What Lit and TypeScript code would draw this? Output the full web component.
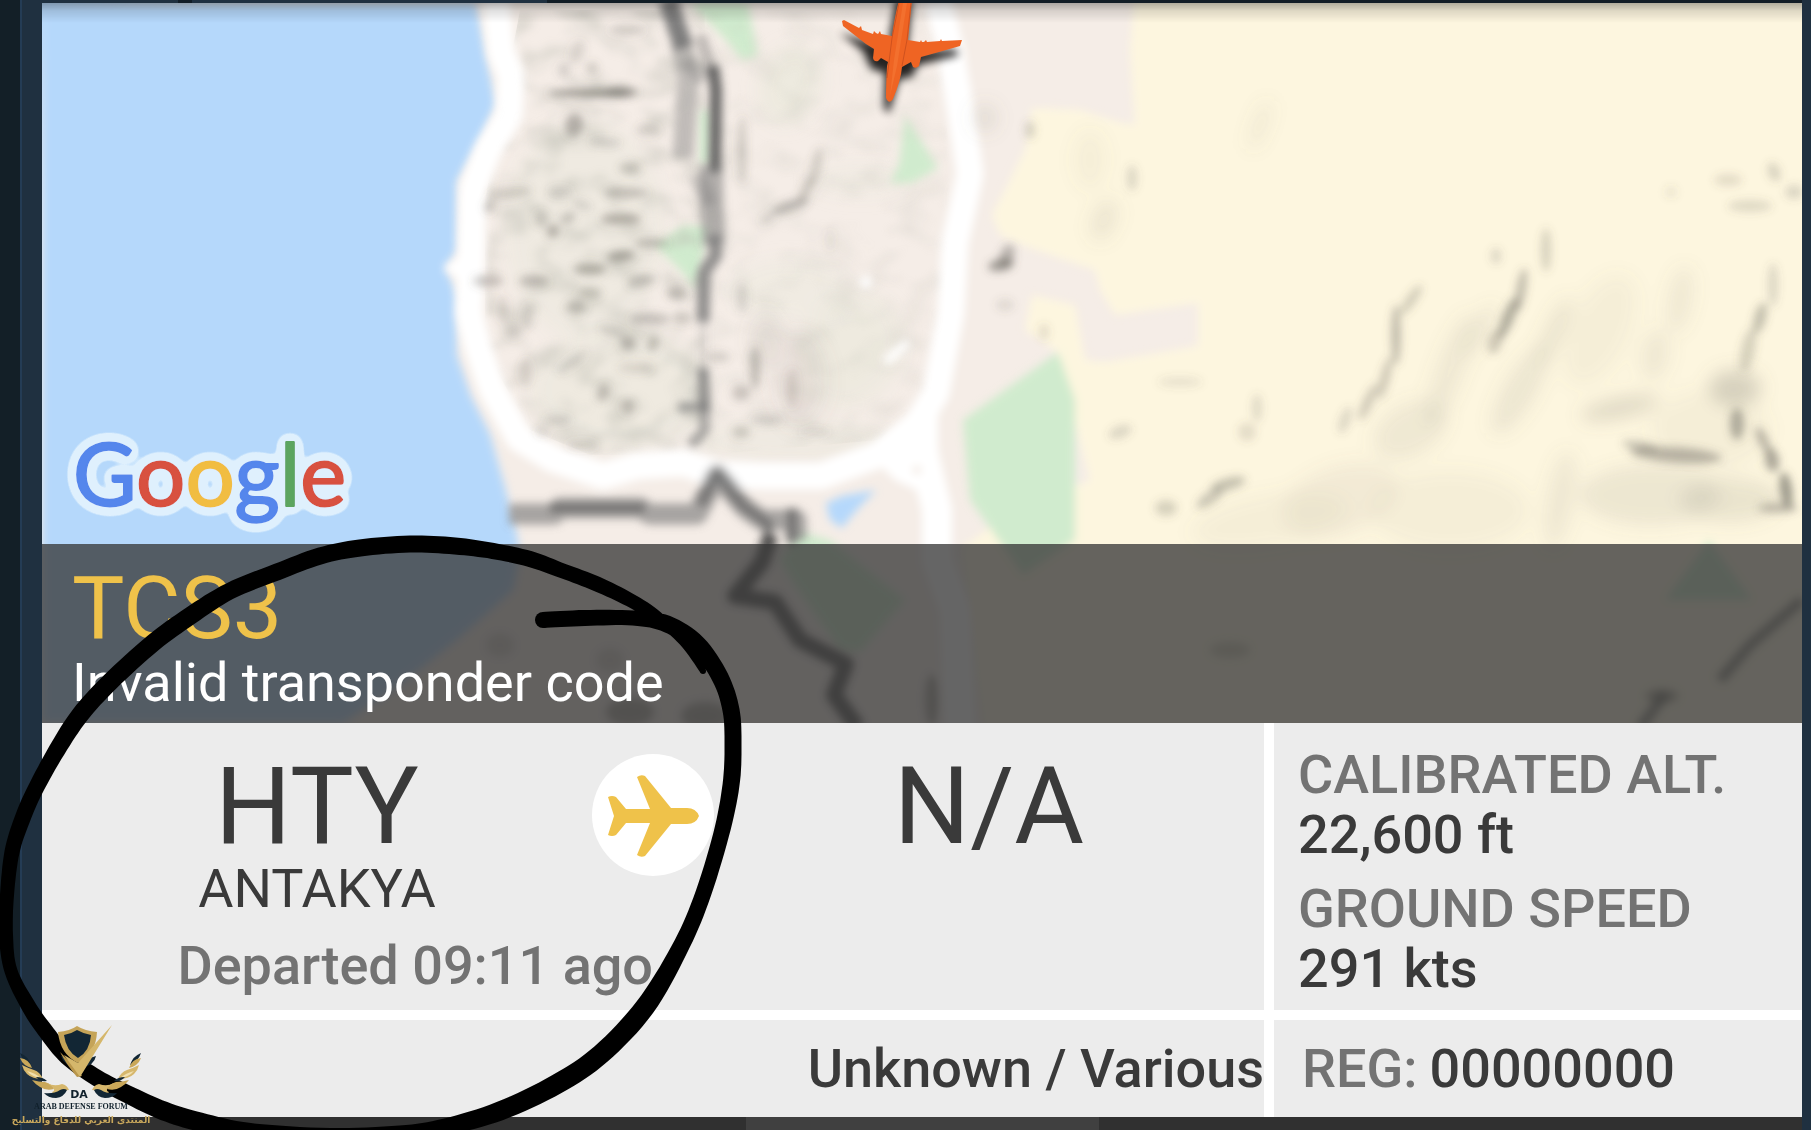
import { LitElement, html, svg, css } from "lit";
import { customElement } from "lit/decorators.js";

type Pt = [number, number];
type InkPt = [number, number, number];

/* Samples a Catmull-Rom curve through the points, then offsets it by half the pen width on each side. */
function ribbon(points: InkPt[]): string {
  const samples: InkPt[] = [];
  const n = points.length;
  for (let i = 0; i < n - 1; i++) {
    const p0 = points[Math.max(0, i - 1)];
    const p1 = points[i];
    const p2 = points[i + 1];
    const p3 = points[Math.min(n - 1, i + 2)];
    for (let s = 0; s < 8; s++) {
      const t = s / 8;
      const v = [0, 1, 2].map(
        (k) =>
          0.5 *
          (2 * p1[k] +
            (p2[k] - p0[k]) * t +
            (2 * p0[k] - 5 * p1[k] + 4 * p2[k] - p3[k]) * t * t +
            (3 * p1[k] - p0[k] - 3 * p2[k] + p3[k]) * t * t * t),
      );
      samples.push([v[0], v[1], v[2]]);
    }
  }
  samples.push(points[n - 1]);
  const left: string[] = [];
  const right: string[] = [];
  samples.forEach((p, i) => {
    const a = samples[Math.max(0, i - 1)];
    const b = samples[Math.min(samples.length - 1, i + 1)];
    const len = Math.hypot(b[0] - a[0], b[1] - a[1]) || 1;
    const nx = (-(b[1] - a[1]) / len) * (p[2] / 2);
    const ny = ((b[0] - a[0]) / len) * (p[2] / 2);
    left.push(`${(p[0] + nx).toFixed(1)} ${(p[1] + ny).toFixed(1)}`);
    right.unshift(`${(p[0] - nx).toFixed(1)} ${(p[1] - ny).toFixed(1)}`);
  });
  return `M${left.concat(right).join("L")}Z`;
}

const INK: InkPt[] = [
  [543, 620, 16], [585, 618, 16], [633, 618, 15], [667, 624, 17], [697, 644, 18],
  [720, 677, 17], [731, 710, 17], [733, 745, 17], [731, 785, 17], [721, 835, 16],
  [701, 900, 16], [679, 950, 17], [645, 1007, 20], [601, 1054, 20], [557, 1084, 20],
  [500, 1111, 19], [445, 1127, 17], [400, 1134, 17], [330, 1137, 18], [250, 1132, 18],
  [200, 1122, 19], [164, 1111, 19], [127, 1094, 18], [97, 1078, 17], [67, 1057, 16],
  [47, 1033, 16], [29, 1007, 15], [11, 971, 13], [6, 935, 14], [7, 895, 14],
  [12, 852, 15], [22, 820, 16], [35, 790, 16], [57, 750, 17], [80, 715, 18],
  [110, 682, 18], [153, 643, 18], [190, 616, 18], [230, 591, 17], [277, 572, 17],
  [320, 556, 17], [360, 548, 17], [410, 544, 17], [455, 546, 17], [493, 551, 16],
  [530, 559, 16], [563, 571, 15], [597, 584, 15], [630, 600, 14], [657, 617, 12],
  [683, 642, 8], [703, 671, 6],
];

const COAST =
  "M42 3H476L486 56L496 104L484 132L469 160L457 181V250L446 268L457 295V355L471 396L490 434L505 487L517 535L520 555L513 590L460 637L400 685L343 723H42Z";
const RING =
  "M496 0L501 52L511 76L509 115L488 150L473 188L471 264L469 313L478 348L492 389L519 438L553 459L603 476L637 466L683 463L718 474L764 476L821 476L878 455L917 424L936 393L951 313L955 243L970 174L964 132L951 52L938 0";

/* Relief shading: x, y, rx, ry, tilt, opacity. */
const RELIEF: number[][] = [
  [590, 93, 42, 4, 0, 0.6], [622, 92, 16, 5, 0, 0.5], [574, 125, 9, 12, 10, 0.4], [605, 142, 16, 4, 0, 0.2],
  [627, 30, 18, 5, 0, 0.25], [577, 52, 7, 12, 20, 0.18], [592, 68, 6, 6, 0, 0.24], [564, 70, 6, 8, 0, 0.2],
  [648, 130, 12, 6, 0, 0.18], [630, 168, 11, 6, 0, 0.26], [510, 193, 22, 6, -8, 0.24], [489, 207, 5, 6, 0, 0.3],
  [560, 192, 12, 5, 0, 0.2], [626, 193, 22, 5, 0, 0.32], [541, 219, 6, 8, 0, 0.25], [568, 218, 8, 5, -30, 0.3],
  [553, 231, 6, 7, 30, 0.42], [582, 205, 10, 4, 20, 0.2], [621, 219, 20, 6, 0, 0.42], [651, 243, 17, 5, 0, 0.34],
  [621, 256, 14, 5, -6, 0.42], [590, 269, 16, 6, 0, 0.44], [488, 281, 15, 6, 0, 0.32], [534, 281, 15, 6, 0, 0.32],
  [641, 281, 14, 6, -10, 0.3], [590, 293, 12, 6, 0, 0.24], [576, 307, 10, 7, 0, 0.34], [677, 293, 10, 7, 0, 0.34],
  [503, 309, 5, 14, 0, 0.16], [528, 316, 5, 14, 10, 0.18], [650, 319, 20, 6, 0, 0.3], [682, 318, 10, 6, 0, 0.26],
  [514, 332, 8, 7, 0, 0.22], [613, 332, 14, 5, 20, 0.22], [628, 344, 7, 7, 0, 0.36], [653, 344, 5, 8, 20, 0.34],
  [572, 362, 18, 5, -35, 0.2], [636, 368, 18, 5, 0, 0.16], [526, 372, 6, 14, 0, 0.16], [603, 393, 6, 9, 20, 0.32],
  [628, 407, 6, 7, 0, 0.32], [558, 420, 14, 5, 0, 0.2], [582, 445, 16, 4, 0, 0.18], [543, 432, 8, 4, 0, 0.18],
  [742, 150, 4, 34, 0, 0.26], [816, 167, 5, 20, 12, 0.24], [790, 206, 19, 5, -20, 0.38], [806, 190, 5, 14, 25, 0.26],
  [767, 219, 8, 4, -30, 0.22], [742, 298, 5, 14, 0, 0.2], [755, 368, 5, 22, 0, 0.34], [718, 357, 12, 5, 0, 0.22],
  [741, 393, 9, 8, 0, 0.28], [767, 420, 16, 5, 0, 0.2], [741, 432, 9, 6, 0, 0.26], [792, 388, 6, 20, 0, 0.16],
  [830, 240, 4, 12, 0, 0.1], [815, 432, 16, 4, 0, 0.12],
  [1001, 265, 13, 6, -10, 0.55], [1007, 256, 7, 12, 20, 0.4], [1030, 130, 5, 9, 0, 0.24], [1005, 305, 9, 6, 0, 0.14],
  [1044, 332, 5, 8, 0, 0.16], [1132, 178, 5, 13, 0, 0.2],
  [1411, 300, 5, 18, 35, 0.26], [1396, 335, 5, 30, 0, 0.36], [1385, 378, 5, 22, 15, 0.28], [1368, 402, 5, 20, 25, 0.28],
  [1345, 420, 5, 14, 20, 0.2], [1257, 408, 5, 14, 0, 0.18], [1247, 432, 9, 9, 20, 0.16], [1120, 432, 12, 6, -20, 0.2],
  [1228, 484, 18, 6, -15, 0.34], [1210, 498, 16, 6, -35, 0.3], [1166, 508, 11, 8, 0, 0.24], [1180, 382, 22, 5, 0, 0.12],
  [1546, 250, 5, 22, 0, 0.24], [1496, 256, 5, 8, 0, 0.2], [1521, 290, 5, 22, 10, 0.36], [1508, 318, 6, 22, 22, 0.46],
  [1495, 342, 7, 12, 15, 0.28], [1728, 180, 14, 6, 0, 0.16],
  [1774, 172, 6, 10, -20, 0.22], [1750, 206, 22, 6, 0, 0.18], [1794, 192, 9, 7, 0, 0.2], [1671, 192, 6, 6, 0, 0.1],
  [1773, 285, 5, 22, 0, 0.2], [1760, 318, 6, 16, 15, 0.34], [1748, 350, 7, 22, 12, 0.24],
  [1737, 424, 7, 16, 0, 0.46], [1676, 455, 46, 8, 4, 0.4], [1640, 446, 18, 5, 10, 0.3],
  [1763, 440, 5, 14, -25, 0.4], [1772, 460, 7, 12, -10, 0.5], [1786, 490, 6, 18, -8, 0.6], [1778, 508, 20, 5, 0, 0.36],
];

/* Wide, faint patches of relief: x, y, rx, ry, tilt, opacity. */
const HAZE: number[][] = [
  [1260, 125, 7, 26, 20, 0.1], [1104, 220, 12, 22, 20, 0.12], [985, 118, 12, 14, 0, 0.14], [1555, 330, 9, 36, 25, 0.14],
  [1735, 388, 26, 18, 0, 0.28], [1620, 408, 40, 10, -12, 0.22], [1655, 355, 14, 26, 10, 0.1], [1680, 300, 12, 34, 10, 0.1],
  [1410, 430, 40, 26, -30, 0.1], [1520, 390, 16, 50, 30, 0.12], [1650, 495, 70, 30, 0, 0.12], [1730, 500, 50, 22, 0, 0.14],
  [1340, 500, 60, 34, -20, 0.08], [1450, 370, 14, 60, 20, 0.1], [1480, 330, 8, 30, 30, 0.12], [1560, 500, 14, 50, 10, 0.1],
  [1450, 510, 80, 40, 0, 0.06], [1270, 520, 80, 26, -10, 0.06], [1710, 430, 60, 40, 0, 0.06], [765, 340, 14, 30, 0, 0.12],
  [800, 380, 30, 50, 0, 0.08], [1600, 330, 30, 60, 25, 0.06], [1090, 160, 16, 30, 0, 0.06],
];

/* Faint green-grey ground cover inside the ring road: x, y, rx, ry, tilt, opacity. */
const COVER: number[][] = [
  [585, 230, 80, 110, 0, 0.5], [620, 390, 90, 60, 0, 0.55], [790, 85, 30, 40, 20, 0.7], [850, 350, 50, 60, 30, 0.6],
  [790, 440, 100, 20, 0, 0.5], [860, 180, 50, 16, 0, 0.3], [790, 290, 60, 30, 0, 0.4],
];

const googleLetters: [string, string][] = [
  ["G", "#5486ec"], ["o", "#d8513f"], ["o", "#f1bd42"], ["g", "#5486ec"], ["l", "#5ba55f"], ["e", "#d8513f"],
];

@customElement("map-view")
export class MapView extends LitElement {
  static styles = css`
    :host { display: block; width: 100%; height: 100%; }
    .map { display: block; width: 100%; height: 100%; }
    .google { font: 400 87px Lato, "Open Sans", sans-serif; }
  `;

  render() {
    const blobs = (list: number[][]) =>
      list.map(([x, y, rx, ry, a, o]) => svg`<ellipse cx=${x} cy=${y} rx=${rx} ry=${ry} opacity=${o} transform="rotate(${a} ${x} ${y})" />`);
    return html`<svg class="map" viewBox="42 3 1760 720" preserveAspectRatio="xMinYMax slice" role="img" aria-label="Terrain map">
      <defs>
        <filter id="soft" x="-5%" y="-5%" width="110%" height="110%"><feGaussianBlur stdDeviation="4" /></filter>
        <filter id="softer" x="-20%" y="-20%" width="140%" height="140%"><feGaussianBlur stdDeviation="9" /></filter>
        <filter id="shade" x="-50%" y="-50%" width="200%" height="200%"><feGaussianBlur stdDeviation="4" /></filter>
        <filter id="grain" x="0" y="0" width="100%" height="100%">
          <feTurbulence type="fractalNoise" baseFrequency="0.028 0.04" numOctaves="2" seed="7" />
          <feColorMatrix values="0 0 0 0 .5  0 0 0 0 .5  0 0 0 0 .44  1.3 0 0 0 -.58" />
          <feGaussianBlur stdDeviation="3" result="noise" />
          <feComposite in="noise" in2="SourceAlpha" operator="in" />
        </filter>
        <filter id="halo" x="-12%" y="-20%" width="124%" height="140%">
          <feGaussianBlur in="SourceAlpha" stdDeviation="6" result="spread" />
          <feComponentTransfer in="spread" result="solid"><feFuncA type="linear" slope="30" intercept="-1" /></feComponentTransfer>
          <feFlood flood-color="#dff0fd" />
          <feComposite in2="solid" operator="in" result="rim" />
          <feMerge><feMergeNode in="rim" /><feMergeNode in="SourceGraphic" /></feMerge>
        </filter>
        <linearGradient id="top" x1="0" y1="0" x2="0" y2="1">
          <stop offset="0" stop-color="#000" stop-opacity=".3" />
          <stop offset=".4" stop-color="#000" stop-opacity=".12" />
          <stop offset="1" stop-color="#000" stop-opacity="0" />
        </linearGradient>
      </defs>
      <rect x="42" y="3" width="1760" height="720" fill="#f5ede7" />
      <g filter="url(#softer)" fill="#e9e8db">${blobs(COVER)}</g>
      <g filter="url(#soft)">
        <path fill="#fdf6df" d="M1135 -10H1820V740H985L962 548L1000 520L1090 480L1075 420L1058 352L1025 330L1032 295L1075 305L1085 360L1105 362L1198 346V303L1115 315L1100 290L1095 270L1030 248L1000 235L992 215L1010 180L1025 150L1032 108L1080 110L1118 122L1135 125L1130 50Z" />
        <path fill="#b5d8fb" d="${COAST}L20 723V-10H480" />
        <path fill="#b5d8fb" d="M826 503L842 496L876 490L862 504L850 518L842 528L830 520Z" />
        <g fill="#d0ebce">
          <path d="M690 3H748L758 56L742 60L726 40Z" />
          <path d="M905 115L938 168L912 183H890L899 165Z" />
          <path d="M656 246L682 226H708L703 255L696 290L680 270Z" />
          <path d="M963 420L1058 352L1075 400V540L1023 575L1000 542L970 500Z" />
          <path d="M700 110H710V164H700Z" />
          <path d="M800 532L830 540L905 600L860 652L840 650L795 585L780 560Z" />
          <path d="M1709 540L1752 600H1665Z" />
        </g>
      </g>
      <path filter="url(#grain)" d="M520 10L705 10L705 455H590L530 430L485 350L485 200Z" />
      <path filter="url(#grain)" opacity=".4" d="M705 10H940L950 180L940 380L880 440L705 455Z" />
      <g filter="url(#soft)" fill="none">
        <path stroke="#fff" stroke-width="27" stroke-linejoin="round" d="${RING}" />
        <path stroke="#fff" stroke-width="30" stroke-linejoin="round" d="M917 415L925 460L937 510V560L955 610L960 730" />
        <path fill="#fff" d="M870 455L938 385V500L895 480Z" />
        <path fill="#fff" d="M443 268L462 254V282Z" />
        <circle cx="866" cy="282" r="6" fill="#fff" /><path stroke="#fff" stroke-width="8" d="M886 362L908 342" />
        <circle cx="917" cy="470" r="4" fill="#f3e8e0" />
        <g stroke="#777" stroke-linejoin="round">
          <path stroke-opacity=".95" stroke-width="19" d="M668 0L677 28L684 48" />
          <path stroke-opacity=".42" stroke-width="21" d="M681 42L688 80L683 158" />
          <path stroke-opacity=".36" stroke-width="16" d="M686 60L705 80M696 175L710 205" />
          <path stroke="#555" stroke-opacity=".35" stroke-width="12" d="M700 35L712 72" />
          <path stroke="#555" stroke-opacity=".9" stroke-width="12" d="M713 66L716 90L715 172" />
          <path stroke-opacity=".55" stroke-width="23" d="M711 165L712 205L714 245" />
          <path stroke-opacity=".8" stroke-width="13" d="M714 235L716 255L704 272L703 322" />
          <path stroke-opacity=".2" stroke-width="8" d="M703 320V378" />
          <path stroke-opacity=".8" stroke-width="11" d="M703 368L705 412" />
          <path stroke-opacity=".6" stroke-width="10" d="M678 407H704L705 430L690 446" />
          <path stroke-opacity=".62" stroke-width="21" d="M509 514H554L560 508H640L650 514H697L717 475L745 508L762 520H796V540" />
          <path stroke="#555" stroke-opacity=".6" stroke-width="10" d="M550 508H645M700 505L717 474L742 505L768 524V545M792 508V545" />
          <path stroke="#333" stroke-opacity=".75" stroke-width="16" d="M771 535L762 562L735 596L775 602L800 640L846 664L834 695L858 728" />
          <path stroke="#555" stroke-opacity=".6" stroke-width="10" d="M1640 728L1665 694M1720 680L1750 645L1802 600" />
        </g>
        <g fill="#6d6b62">
          <ellipse cx="630" cy="712" rx="24" ry="14" opacity=".5" /><ellipse cx="705" cy="716" rx="24" ry="14" opacity=".5" />
          <ellipse cx="500" cy="645" rx="14" ry="12" opacity=".2" /><ellipse cx="610" cy="660" rx="14" ry="12" opacity=".2" />
          <ellipse cx="932" cy="700" rx="7" ry="26" opacity=".5" /><ellipse cx="1230" cy="650" rx="20" ry="8" opacity=".25" />
          <ellipse cx="1662" cy="696" rx="16" ry="7" opacity=".5" />
        </g>
      </g>
      <g filter="url(#softer)" fill="#7a786a">${blobs(HAZE)}</g>
      <g filter="url(#soft)" fill="#5c5a53">${blobs(RELIEF)}</g>
      <rect x="42" y="3" width="1760" height="20" fill="url(#top)" />
      <path transform="translate(-3 11)" filter="url(#shade)" opacity=".85" d="M899 -12L891 36L843 22L866 40L874 58L888 62L887 98L892 102L902 68L915 66L921 54L962 44L958 38L910 40L915 -12Z" />
      <g fill="#ef6423">
        <path d="M899 0Q894 20 892 36L881 34L880 31L878 34L876 33L874 31L873 34L862 30L861 26L859 28L844 20L842 21L843 26L866 44L874 49L873 58Q874 62 878 61L881 58L888 62L887 66Q886 85 886 98Q889 105 893 99Q901 80 902 67L911 62L913 67Q916 69 919 66L921 57L939 52L960 46L962 40L942 41L941 39L940 41L927 42L926 40L924 42L922 42L921 40L920 42L908 40L912 0Z" />
        <path fill="#f57836" opacity=".6" d="M903 3L894 60L890 96L897 66L907 3Z" />
        <path fill="none" stroke="#b9441a" opacity=".6" d="M899 3L892 38L887 78M911 3L907 40L902 66" />
      </g>
      <text class="google" x="73" y="506" filter="url(#halo)" stroke-width="2" stroke-linejoin="round">${googleLetters.map(
        ([letter, color]) => svg`<tspan fill=${color} stroke=${color}>${letter}</tspan>`,
      )}</text>
    </svg>`;
  }
}

/* One side of the laurel; the other side is the same drawing mirrored. */
const laurel = svg`
  <path fill="#122634" d="M10 53Q18 56 21 65Q13 62 10 53Z" />
  <path fill="#c9a759" d="M10 58Q19 59 22 68Q13 66 10 58Z" />
  <path fill="#d6b76c" d="M12 65Q18 68 24 70Q30 72 33 79Q22 79 17 74Q13 70 12 65Z" />
  <path fill="#f0dfae" d="M17 71Q25 73 31 78Q22 77 17 71Z" />
  <path fill="#c9a759" d="M22 80Q29 82 35 82Q42 84 44 89Q36 91 30 87Q25 84 22 80Z" />
  <path fill="#122634" d="M26 77Q33 77 37 81Q30 82 26 77Z" />
  <path fill="#d6b76c" d="M37 83Q44 87 52 84Q57 85 59 90Q54 90 50 95Q45 97 42 92Q48 90 37 83Z" />
  <path fill="#122634" d="M34 93Q44 94 50 90Q54 88 57 90Q54 97 46 98Q38 98 34 93Z" />`;

@customElement("forum-mark")
export class ForumMark extends LitElement {
  static styles = css`
    :host { display: flex; flex-direction: column; align-items: center; width: 130px; }
    .crest { display: block; width: 130px; height: 78px; }
    .initials { font: 700 11px/1 "DejaVu Sans", sans-serif; }
    .name { margin: 0; font: 700 8px/13px "Liberation Serif", serif; color: #10202b; white-space: nowrap; }
    .arabic { margin: 0; font: 700 9px/14px "DejaVu Sans", sans-serif; color: #c9a85c; white-space: nowrap; }
  `;

  render() {
    return html`
      <svg class="crest" viewBox="16 1022 130 78" role="img" aria-label="DA">
        <g transform="translate(10 1000)">${laurel}</g>
        <g transform="translate(151 1000) scale(-1 1)">${laurel}</g>
        <path fill="#122634" d="M61 1056Q64 1066 77 1067L68 1058ZM96 1056Q94 1066 82 1067L90 1058Z" />
        <path fill="#c5a458" d="M58 1032Q70 1031 77 1026Q85 1031 97 1032Q96 1054 78 1063Q60 1054 58 1032Z" />
        <path fill="#122634" d="M64 1035Q71 1034 77 1030Q84 1034 91 1035Q90 1051 78 1058Q66 1051 64 1035Z" />
        <path fill="#b8954a" d="M60 1052L78 1070L82 1076L77 1077Q66 1064 60 1052Z" />
        <path fill="#d5b76b" d="M64 1055L78 1063L112 1025L80 1077Z" />
        <text class="initials" x="79" y="1098" text-anchor="middle" fill="#10202b">DA</text>
      </svg>
      <p class="name">ARAB DEFENSE FORUM</p>
      <p class="arabic" lang="ar" dir="rtl">المنتدى العربي للدفاع والتسليح</p>
    `;
  }
}

@customElement("app-root")
export class AppRoot extends LitElement {
  static styles = css`
    :host { display: block; font-family: Roboto, "Liberation Sans", sans-serif; color: #3a3a3a; }
    .page {
      position: relative; display: grid; grid-template-columns: 20px 22px minmax(0, 1fr) 9px;
      min-height: 100vh; overflow: hidden; background: #1f3040;
    }
    .edge { background: #131f27; }
    .rail { border-left: 2px solid #243c55; }
    .screen { display: flex; flex-direction: column; }
    .tabs { display: grid; grid-template-columns: 136px 14px 355px 1fr; height: 3px; }
    .gap { background: #121d26; }
    .stage { position: relative; flex: 1; display: flex; flex-direction: column; justify-content: flex-end; }
    .backdrop { position: absolute; inset: 0; }
    .banner {
      position: relative; padding: 17px 30px 12px; background: rgba(52, 52, 52, 0.76);
      color: #fff; font-size: 54px; line-height: 56px;
    }
    h1, p, dl, dd, dt { margin: 0; font-weight: inherit; }
    .callsign { font-size: 88px; line-height: 94px; color: #efc24a; }
    .details {
      display: grid; grid-template-columns: 1222fr 528fr; gap: 10px; background: #fff;
      font-size: 54px; line-height: 60px; font-weight: 500;
    }
    .cell { background: #ececec; white-space: nowrap; }
    .route {
      display: grid; grid-template-columns: 1fr 122px 1fr; align-items: start;
      padding: 30px 0 16px; font-weight: 400; line-height: 56px;
    }
    .airport { text-align: center; }
    .code { font-size: 107px; line-height: 108px; }
    .badge { display: block; width: 122px; height: 122px; margin-top: 1px; }
    .departed { width: 50%; margin-top: 21px; grid-column: 1 / -1; text-align: right; font-weight: 500; color: #737373; }
    .stats { padding: 22px 24px 0; }
    .label { color: #737373; }
    .value + .label { margin-top: 14px; }
    .model { padding: 19px 0 18px; text-align: right; }
    .reg { display: flex; gap: 12px; padding: 19px 28px 18px; }
    .nav { display: grid; grid-template-columns: 704fr 353fr 703fr; height: 13px; background: #303030; }
    .thumb { grid-column: 2; background: #404040; }
    .ink { position: absolute; inset: 0; width: 100%; height: 100%; pointer-events: none; }
    .mark { position: absolute; left: 16px; bottom: 3px; }
  `;

  render() {
    const start = INK[0];
    const end = INK[INK.length - 1];
    const caps: Pt[] = [[start[0], start[1]], [end[0], end[1]]];
    return html`
      <div class="page">
        <div class="edge"></div>
        <div class="rail"></div>
        <main class="screen">
          <div class="tabs"><span></span><span class="gap"></span><span></span><span class="gap"></span></div>
          <section class="stage">
            <map-view class="backdrop"></map-view>
            <header class="banner">
              <h1 class="callsign">TCS3</h1>
              <p>Invalid transponder code</p>
            </header>
          </section>
          <section class="details">
            <div class="cell route">
              <div class="airport">
                <p class="code">HTY</p>
                <p>ANTAKYA</p>
              </div>
              <svg class="badge" viewBox="0 0 122 122" aria-hidden="true">
                <circle cx="61" cy="61" r="61" fill="#fff" />
                <path fill="#efc24a" d="M45 23Q49 20 53 22L79 54H95Q104 54 107 62Q104 70 95 70H79L53 102Q49 104 45 101L58 69H34L24 81Q20 83 16 81L22 62L16 43Q20 41 24 43L34 55H58Z" />
              </svg>
              <div class="airport"><p class="code">N/A</p></div>
              <p class="departed">Departed 09:11 ago</p>
            </div>
            <dl class="cell stats">
              <dt class="label">CALIBRATED ALT.</dt>
              <dd class="value">22,600 ft</dd>
              <dt class="label">GROUND SPEED</dt>
              <dd class="value">291 kts</dd>
            </dl>
            <p class="cell model">Unknown / Various</p>
            <dl class="cell reg">
              <dt class="label">REG:</dt>
              <dd>00000000</dd>
            </dl>
          </section>
          <div class="nav"><span class="thumb"></span></div>
        </main>
        <div></div>
        <svg class="ink" viewBox="0 0 1811 1130" preserveAspectRatio="none" aria-hidden="true">
          <path d=${ribbon(INK)} />
          ${caps.map(([x, y], i) => svg`<circle cx=${x} cy=${y} r=${i === 0 ? 8 : 3} />`)}
        </svg>
        <forum-mark class="mark"></forum-mark>
      </div>
    `;
  }
}
